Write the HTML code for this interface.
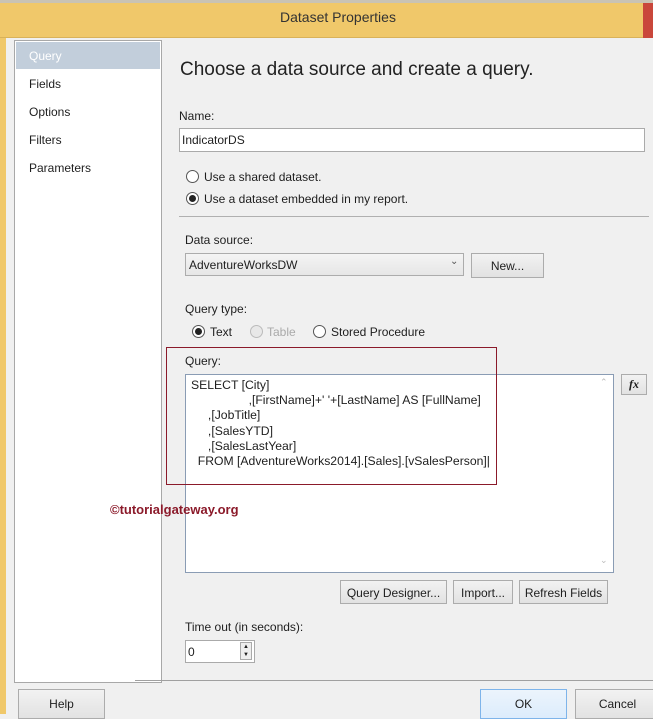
<!DOCTYPE html>
<html><head><meta charset="utf-8"><style>
*{margin:0;padding:0;box-sizing:border-box}
body{width:653px;height:714px;overflow:hidden;background:#f0f0f0;font-family:"Liberation Sans",sans-serif;font-size:12px;color:#1e1e1e;position:relative}
.a{position:absolute;white-space:nowrap}
.btn{position:absolute;background:linear-gradient(#f2f2f2,#e2e2e2);border:1px solid #acacac;text-align:center;font-size:12px}
.rad{position:absolute;width:13px;height:13px;border-radius:50%;border:1px solid #555;background:#fff}
.rad.on::after{content:"";position:absolute;left:2px;top:2px;width:7px;height:7px;border-radius:50%;background:#222}
</style></head><body>
<div class="a" style="left:0;top:0;width:653px;height:4px;background:#c9c3b4"></div>
<div class="a" style="left:0;top:3px;width:653px;height:35px;background:#f0c86a;border-bottom:1px solid #d9b25a"></div>
<div class="a" style="left:643px;top:3px;width:10px;height:35px;background:#c9473b"></div>
<div class="a" style="left:280px;top:9px;font-size:14px;color:#333">Dataset Properties</div>
<div class="a" style="left:0;top:38px;width:6px;height:676px;background:#f0c86a"></div>

<div class="a" style="left:14px;top:40px;width:148px;height:643px;background:#fff;border:1px solid #a8a8a8"></div>
<div class="a" style="left:16px;top:42px;width:144px;height:27px;background:#c2cedb"></div>
<div class="a" style="left:29px;top:49px;color:#fff">Query</div>
<div class="a" style="left:29px;top:77px">Fields</div>
<div class="a" style="left:29px;top:105px">Options</div>
<div class="a" style="left:29px;top:133px">Filters</div>
<div class="a" style="left:29px;top:161px">Parameters</div>
<div class="a" style="left:135px;top:680px;width:518px;height:1px;background:#a0a0a0"></div>

<div class="a" style="left:180px;top:59px;font-size:19px;color:#222">Choose a data source and create a query.</div>
<div class="a" style="left:179px;top:109px">Name:</div>
<div class="a" style="left:179px;top:128px;width:466px;height:24px;background:#fff;border:1px solid #aaa;padding:4px 2px">IndicatorDS</div>
<div class="rad" style="left:186px;top:170px"></div>
<div class="a" style="left:204px;top:170px">Use a shared dataset.</div>
<div class="rad on" style="left:186px;top:192px"></div>
<div class="a" style="left:204px;top:192px">Use a dataset embedded in my report.</div>
<div class="a" style="left:179px;top:216px;width:470px;height:1px;background:#b0b0b0"></div>
<div class="a" style="left:185px;top:233px">Data source:</div>
<div class="a" style="left:185px;top:253px;width:279px;height:23px;background:linear-gradient(#f4f4f4,#e6e6e6);border:1px solid #acacac;padding:4px 3px">AdventureWorksDW</div>
<div class="a" style="left:450px;top:256px;font-size:10px;color:#555">&#8964;</div>
<div class="btn" style="left:471px;top:253px;width:73px;height:25px;padding-top:5px">New...</div>
<div class="a" style="left:185px;top:302px">Query type:</div>
<div class="rad on" style="left:192px;top:325px"></div>
<div class="a" style="left:210px;top:325px">Text</div>
<div class="rad" style="left:250px;top:325px;border-color:#bbb;background:#e8e8e8"></div>
<div class="a" style="left:267px;top:325px;color:#aaa">Table</div>
<div class="rad" style="left:313px;top:325px"></div>
<div class="a" style="left:331px;top:325px">Stored Procedure</div>

<div class="a" style="left:185px;top:354px">Query:</div>
<div class="a" style="left:185px;top:374px;width:429px;height:199px;background:#fff;border:1px solid #8a9cb4"></div>
<div class="a" style="left:191px;top:378px;line-height:15.2px;white-space:pre;font-size:12.2px">SELECT [City]
                 ,[FirstName]+' '+[LastName] AS [FullName]
     ,[JobTitle]
     ,[SalesYTD]
     ,[SalesLastYear]
  FROM [AdventureWorks2014].[Sales].[vSalesPerson]|</div>
<div class="a" style="left:600px;top:377px;font-size:9px;color:#bbb">&#8963;</div>
<div class="a" style="left:600px;top:555px;font-size:9px;color:#bbb">&#8964;</div>
<div class="a" style="left:166px;top:347px;width:331px;height:138px;border:1px solid #8b1a2a"></div>
<div class="btn" style="left:621px;top:374px;width:26px;height:21px;font-style:italic;font-weight:bold;font-family:'Liberation Serif',serif;padding-top:2px">fx</div>
<div class="a" style="left:110px;top:502px;font-weight:bold;font-size:13px;color:#8b1a2a">&copy;tutorialgateway.org</div>

<div class="btn" style="left:340px;top:580px;width:107px;height:24px;padding-top:5px">Query Designer...</div>
<div class="btn" style="left:453px;top:580px;width:60px;height:24px;padding-top:5px">Import...</div>
<div class="btn" style="left:519px;top:580px;width:89px;height:24px;padding-top:5px">Refresh Fields</div>
<div class="a" style="left:185px;top:620px">Time out (in seconds):</div>
<div class="a" style="left:185px;top:640px;width:70px;height:23px;background:#fff;border:1px solid #aaa;padding:4px 2px">0</div>
<div class="a" style="left:240px;top:642px;width:12px;height:18px;border:1px solid #aaa;background:#eee;font-size:6px;line-height:8px;text-align:center">&#9650;<br>&#9660;</div>

<div class="btn" style="left:18px;top:689px;width:87px;height:30px;padding-top:7px">Help</div>
<div class="btn" style="left:480px;top:689px;width:87px;height:30px;padding-top:7px;border-color:#7eb4ea;background:linear-gradient(#ecf4fc,#dcecfc)">OK</div>
<div class="btn" style="left:575px;top:689px;width:85px;height:30px;padding-top:7px">Cancel</div>
</body></html>
